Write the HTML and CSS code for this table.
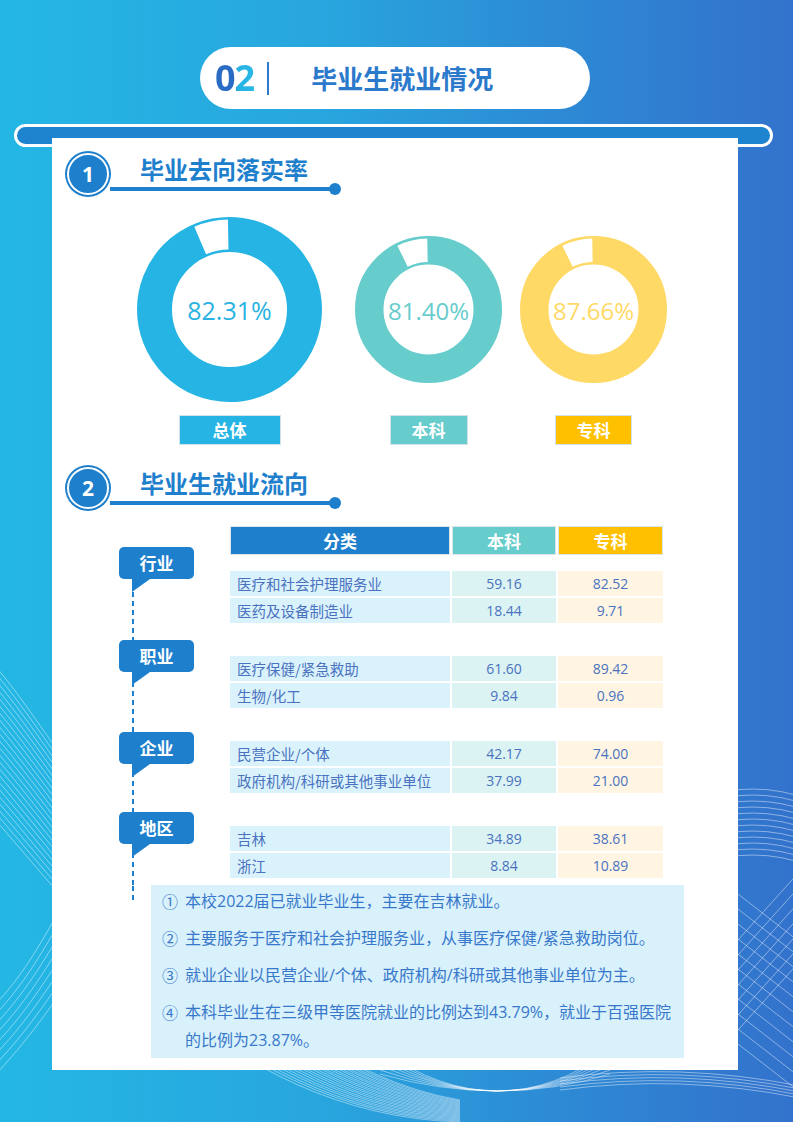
FILE: index.html
```html
<!DOCTYPE html>
<html lang="zh-CN">
<head>
<meta charset="utf-8">
<title>毕业生就业情况</title>
<link rel="stylesheet" href="styles.css">
</head>
<body>
<div class="page">
  <svg class="bg-lines" viewBox="0 0 793 1122" width="793" height="1122" aria-hidden="true">
    <g class="wave">
      <path d="M-10 660 C80 760 220 1060 460 1100 M-10 667 C80 767 220 1062 460 1101 M-10 674 C80 774 220 1065 460 1102 M-10 681 C80 781 220 1067 460 1103 M-10 688 C80 788 220 1070 460 1104 M-10 695 C80 795 220 1072 460 1105 M-10 702 C80 802 220 1075 460 1106 M-10 709 C80 809 220 1077 460 1107 M-10 716 C80 816 220 1080 460 1108 M-10 723 C80 823 220 1082 460 1109 M-10 730 C80 830 220 1085 460 1110 M-10 737 C80 837 220 1087 460 1111 M-10 744 C80 844 220 1090 460 1112 M-10 751 C80 851 220 1092 460 1113 M-10 758 C80 858 220 1095 460 1114 M-10 765 C80 865 220 1097 460 1115 M-10 772 C80 872 220 1100 460 1116 M-10 779 C80 879 220 1102 460 1117 M-10 786 C80 886 220 1105 460 1118 M-10 793 C80 893 220 1107 460 1119 M-10 800 C80 900 220 1110 460 1120 M-10 807 C80 907 220 1112 460 1121 M-10 814 C80 914 220 1115 460 1122"/>
      <path d="M-10 1010 C40 960 60 900 90 860 M-10 1020 C40 970 62 910 92 870 M-10 1030 C40 980 64 920 94 880 M-10 1040 C40 990 66 930 96 890 M-10 1050 C40 1000 68 940 98 900 M-10 1060 C40 1010 70 950 100 910 M-10 1070 C40 1020 72 960 102 920 M-10 1080 C40 1030 74 970 104 930"/>
      <path d="M380 1050 Q500 1132 610 1050 M380 1054 Q500 1128 610 1054 M380 1058 Q500 1124 610 1058 M380 1062 Q500 1120 610 1062 M380 1066 Q500 1116 610 1066 M380 1070 Q500 1112 610 1070 M380 1074 Q500 1108 610 1074"/>
      <path d="M560 1078 Q680 1062 800 1086 M560 1081 Q680 1065 800 1089 M560 1084 Q680 1068 800 1092 M560 1087 Q680 1071 800 1095 M560 1090 Q680 1074 800 1098"/>
      <path d="M690 800 Q755 778 810 800 M690 806 Q755 784 810 806 M690 812 Q755 790 810 812 M690 818 Q755 796 810 818 M690 824 Q755 802 810 824 M690 830 Q755 808 810 830 M690 836 Q755 814 810 836 M690 842 Q755 820 810 842 M690 848 Q755 826 810 848 M690 854 Q755 832 810 854 M690 860 Q755 838 810 860 M690 866 Q755 844 810 866"/>
      <path d="M720 880 L810 950 M720 895 L810 965 M720 910 L810 980 M720 925 L810 995 M720 940 L810 1010 M720 955 L810 1025 M720 970 L810 1040 M720 985 L810 1055 M720 1000 L810 1070 M720 1015 L810 1085 M720 1030 L810 1100"/>
      <path d="M720 960 L810 860 M720 975 L810 875 M720 990 L810 890 M720 1005 L810 905 M720 1020 L810 920 M720 1035 L810 935 M720 1050 L810 950"/>
    </g>
  </svg>

  <div class="content">
    <header class="title-pill">
      <span class="title-num">02</span>
      <span class="title-sep"></span>
      <h1 class="title-text">毕业生就业情况</h1>
    </header>

    <div class="top-bar"></div>

    <main class="card">
      <section class="sec-head">
        <div class="sec-num">1</div>
        <div class="sec-text">
          <h2 class="sec-title">毕业去向落实率</h2>
          <div class="sec-line"><span class="sec-line-bar"></span><span class="sec-line-dot"></span></div>
        </div>
      </section>

      <section class="donuts">
        <div class="donut donut--total">
          <div class="donut-box">
            <svg width="185" height="185" viewBox="0 0 185 185">
              <circle cx="92.5" cy="92.5" r="75" fill="none" stroke="#25b4e3" stroke-width="35"/>
              <path d="M90.93 2.51 A90 90 0 0 0 57.33 9.65 L69.06 37.27 A60 60 0 0 1 91.45 32.51 Z" fill="#fff"/>
              <text class="donut-pct donut-pct--big" x="92.5" y="93" text-anchor="middle" dominant-baseline="central" fill="#2ab3e2">82.31%</text>
            </svg>
          </div>
          <div class="donut-label donut-label--total">总体</div>
        </div>
        <div class="donut donut--ben">
          <div class="donut-box">
            <svg width="147" height="147" viewBox="0 0 147 147">
              <circle cx="73.5" cy="73.5" r="59.25" fill="none" stroke="#66cccc" stroke-width="28.5"/>
              <path d="M72.26 2.51 A71 71 0 0 0 42.38 9.69 L52.68 30.81 A47.5 47.5 0 0 1 72.67 26.01 Z" fill="#fff"/>
              <text class="donut-pct" x="73.5" y="74" text-anchor="middle" dominant-baseline="central" fill="#66cccc">81.40%</text>
            </svg>
          </div>
          <div class="donut-label donut-label--ben">本科</div>
        </div>
        <div class="donut donut--zhuan">
          <div class="donut-box">
            <svg width="147" height="147" viewBox="0 0 147 147">
              <circle cx="73.5" cy="73.5" r="59.25" fill="none" stroke="#ffd966" stroke-width="28.5"/>
              <path d="M72.26 2.51 A71 71 0 0 0 42.38 9.69 L52.68 30.81 A47.5 47.5 0 0 1 72.67 26.01 Z" fill="#fff"/>
              <text class="donut-pct" x="73.5" y="74" text-anchor="middle" dominant-baseline="central" fill="#ffd966">87.66%</text>
            </svg>
          </div>
          <div class="donut-label donut-label--zhuan">专科</div>
        </div>
      </section>

      <section class="sec-head sec-head--second">
        <div class="sec-num">2</div>
        <div class="sec-text">
          <h2 class="sec-title">毕业生就业流向</h2>
          <div class="sec-line"><span class="sec-line-bar"></span><span class="sec-line-dot"></span></div>
        </div>
      </section>

      <section class="flow">
        <div class="timeline">
          <div class="badge badge--1"><div class="badge-box">行业</div><div class="badge-tail"></div></div>
          <div class="badge badge--2"><div class="badge-box">职业</div><div class="badge-tail"></div></div>
          <div class="badge badge--3"><div class="badge-box">企业</div><div class="badge-tail"></div></div>
          <div class="badge badge--4"><div class="badge-box">地区</div><div class="badge-tail"></div></div>
        </div>

        <div class="table">
          <div class="t-row t-head">
            <div class="th th--cat">分类</div>
            <div class="th th--ben">本科</div>
            <div class="th th--zhuan">专科</div>
          </div>

          <div class="t-group">
            <div class="t-row">
              <div class="cell cell--cat">医疗和社会护理服务业</div>
              <div class="cell cell--ben">59.16</div>
              <div class="cell cell--zhuan">82.52</div>
            </div>
            <div class="t-row">
              <div class="cell cell--cat">医药及设备制造业</div>
              <div class="cell cell--ben">18.44</div>
              <div class="cell cell--zhuan">9.71</div>
            </div>
          </div>

          <div class="t-group">
            <div class="t-row">
              <div class="cell cell--cat">医疗保健/紧急救助</div>
              <div class="cell cell--ben">61.60</div>
              <div class="cell cell--zhuan">89.42</div>
            </div>
            <div class="t-row">
              <div class="cell cell--cat">生物/化工</div>
              <div class="cell cell--ben">9.84</div>
              <div class="cell cell--zhuan">0.96</div>
            </div>
          </div>

          <div class="t-group">
            <div class="t-row">
              <div class="cell cell--cat">民营企业/个体</div>
              <div class="cell cell--ben">42.17</div>
              <div class="cell cell--zhuan">74.00</div>
            </div>
            <div class="t-row">
              <div class="cell cell--cat">政府机构/科研或其他事业单位</div>
              <div class="cell cell--ben">37.99</div>
              <div class="cell cell--zhuan">21.00</div>
            </div>
          </div>

          <div class="t-group">
            <div class="t-row">
              <div class="cell cell--cat">吉林</div>
              <div class="cell cell--ben">34.89</div>
              <div class="cell cell--zhuan">38.61</div>
            </div>
            <div class="t-row">
              <div class="cell cell--cat">浙江</div>
              <div class="cell cell--ben">8.84</div>
              <div class="cell cell--zhuan">10.89</div>
            </div>
          </div>
        </div>
      </section>

      <section class="notes-row">
        <div class="notes-stub"></div>
        <div class="notes">
          <p class="note"><span class="note-num">①</span><span class="note-text">本校2022届已就业毕业生，主要在吉林就业。</span></p>
          <p class="note"><span class="note-num">②</span><span class="note-text">主要服务于医疗和社会护理服务业，从事医疗保健/紧急救助岗位。</span></p>
          <p class="note"><span class="note-num">③</span><span class="note-text">就业企业以民营企业/个体、政府机构/科研或其他事业单位为主。</span></p>
          <p class="note"><span class="note-num">④</span><span class="note-text">本科毕业生在三级甲等医院就业的比例达到43.79%，就业于百强医院的比例为23.87%。</span></p>
        </div>
      </section>
    </main>
  </div>
</div>
</body>
</html>
```

FILE: styles.css
```css
* { box-sizing: border-box; }

html, body {
  margin: 0;
  padding: 0;
}

body {
  font-family: "Noto Sans CJK SC", "Noto Sans", sans-serif;
}

.page {
  position: relative;
  width: 793px;
  height: 1122px;
  overflow: hidden;
  background: linear-gradient(90deg, #24b7e4 0%, #28a6de 40%, #2e86d3 75%, #3372cc 100%);
}

.bg-lines {
  position: absolute;
  left: 0;
  top: 0;
  pointer-events: none;
}

.wave path {
  fill: none;
  stroke: rgba(255, 255, 255, 0.55);
  stroke-width: 0.8;
}

.content {
  position: relative;
  padding-top: 47px;
}

/* ---------- Title pill ---------- */
.title-pill {
  display: flex;
  align-items: center;
  width: 390px;
  height: 62px;
  margin-left: 200px;
  padding-left: 15px;
  background: #fff;
  border-radius: 31px;
}

.title-num {
  font-family: "Open Sans", "Noto Sans", sans-serif;
  font-weight: 700;
  font-size: 36px;
  line-height: 1;
  letter-spacing: -1px;
  background: linear-gradient(90deg, #2a6cc4 0%, #2a6cc4 48%, #28b2e4 58%, #28b8e6 100%);
  -webkit-background-clip: text;
  background-clip: text;
  color: transparent;
}

.title-sep {
  width: 2px;
  height: 33px;
  margin-left: 13px;
  background: #2e7bcc;
}

.title-text {
  margin: 0 0 0 42px;
  font-size: 26px;
  font-weight: 700;
  color: #2b79cb;
  line-height: 1;
}

/* ---------- Top bar + card ---------- */
.top-bar {
  width: 759px;
  height: 23px;
  margin: 15px 0 0 14px;
  border: 3px solid #fff;
  border-radius: 12px;
  background: #1e84cf;
}

.card {
  display: block;
  width: 686px;
  height: 932px;
  margin: -9px 0 0 52px;
  padding: 13px 0 0 13px;
  background: #fff;
}

/* ---------- Section header ---------- */
.sec-head {
  display: flex;
  align-items: flex-start;
}

.sec-head--second {
  margin-top: 20px;
}

.sec-num {
  width: 42px;
  height: 42px;
  margin: 2px;
  border-radius: 50%;
  background: #1e80cc;
  border: 2px solid #fff;
  box-shadow: 0 0 0 2px #1e80cc;
  color: #fff;
  font-family: "Open Sans", "Noto Sans", sans-serif;
  font-weight: 700;
  font-size: 21px;
  display: flex;
  align-items: center;
  justify-content: center;
}

.sec-text {
  margin-left: -1px;
  padding-top: 4px;
}

.sec-title {
  margin: 0 0 0 30px;
  font-size: 24px;
  line-height: 28px;
  font-weight: 700;
  color: #1e80cc;
}

.sec-line {
  display: flex;
  align-items: center;
  height: 12px;
}

.sec-line-bar {
  display: block;
  width: 222px;
  height: 4px;
  background: #1e80cc;
}

.sec-line-dot {
  display: block;
  width: 12px;
  height: 12px;
  margin-left: -3px;
  border-radius: 50%;
  background: #1e80cc;
}

/* ---------- Donuts ---------- */
.donuts {
  display: flex;
  margin: 20px 0 0 72px;
}

.donut {
  display: flex;
  flex-direction: column;
  align-items: center;
}

.donut--total { width: 185px; }
.donut--ben { width: 147px; margin-left: 33px; }
.donut--zhuan { width: 147px; margin-left: 18px; }

.donut-box {
  height: 185px;
  display: flex;
  align-items: center;
  justify-content: center;
}

.donut-box svg { display: block; }

.donut-pct {
  font-family: "Open Sans", "Noto Sans", sans-serif;
  font-size: 24px;
  font-weight: 400;
}

.donut-pct--big { font-size: 25px; }

.donut-label {
  margin-top: 13px;
  height: 30px;
  line-height: 28px;
  border: 1px solid #d3e2ea;
  color: #fff;
  font-weight: 700;
  font-size: 17px;
  text-align: center;
}

.donut-label--total { width: 102px; background: #25b4e3; }
.donut-label--ben { width: 78px; background: #66cccc; }
.donut-label--zhuan { width: 77px; background: #ffc000; }

/* ---------- Flow ---------- */
.flow {
  display: grid;
  grid-template-columns: 75px 433px;
  column-gap: 36px;
  margin: 15px 0 0 54px;
}

.timeline {
  display: flex;
  flex-direction: column;
  background-image: repeating-linear-gradient(to bottom, #1e80cc 0 5px, transparent 5px 9px);
  background-repeat: no-repeat;
  background-size: 2px calc(100% - 66px);
  background-position: 13px 66px;
}

.badge { display: flex; flex-direction: column; }
.badge--1 { margin-top: 21px; }
.badge--2 { margin-top: 48px; }
.badge--3 { margin-top: 47px; }
.badge--4 { margin-top: 35px; }

.badge-box {
  height: 32px;
  border-radius: 5px;
  background: #1e80cc;
  color: #fff;
  font-weight: 700;
  font-size: 17px;
  line-height: 32px;
  text-align: center;
}

.badge-tail {
  width: 18px;
  height: 13px;
  margin-left: 13px;
  background: #1e80cc;
  clip-path: polygon(0 0, 100% 0, 0 100%);
}

.table {
  padding-bottom: 7px;
}

.t-row {
  display: grid;
  grid-template-columns: 220px 104px 105px;
  column-gap: 2px;
}

.t-head {
  height: 29px;
}

.th {
  height: 29px;
  line-height: 27px;
  border: 1px solid #dde5e9;
  color: #fff;
  font-weight: 700;
  font-size: 17px;
  text-align: center;
}

.th--cat { background: #1e80cc; }
.th--ben { background: #66cccc; }
.th--zhuan { background: #ffc000; }

.t-group {
  display: flex;
  flex-direction: column;
  row-gap: 2px;
  margin-top: 33px;
}

.t-head + .t-group { margin-top: 16px; }

.cell {
  height: 25px;
  line-height: 25px;
  color: #4a72c0;
  white-space: nowrap;
}

.cell--cat {
  padding-left: 7px;
  background: #daf2fb;
  font-size: 14.5px;
  font-weight: 400;
}

.cell--ben,
.cell--zhuan {
  text-align: center;
  font-family: "Open Sans", "Noto Sans", sans-serif;
  font-size: 14px;
}

.cell--ben { background: #dcf3f3; }
.cell--zhuan { background: #fff5e2; }

/* ---------- Notes ---------- */
.notes-row {
  display: flex;
  align-items: flex-start;
  margin-left: 67px;
}

.notes-stub {
  width: 2px;
  height: 19px;
  background-image: repeating-linear-gradient(to bottom, transparent 0 1px, #1e80cc 1px 6px, transparent 6px 9px);
}

.notes {
  width: 533px;
  margin-left: 17px;
  padding: 2px 6px 4px 11px;
  background: #d9f1fb;
  color: #3878cb;
  font-family: "Open Sans", "Noto Sans CJK SC", sans-serif;
  font-size: 16px;
  line-height: 28px;
}

.note {
  display: flex;
  margin: 0;
}

.note + .note { margin-top: 9px; }

.note-num {
  flex: 0 0 23px;
  font-family: "Noto Sans CJK SC", sans-serif;
}

.note-text { flex: 1; }
```
